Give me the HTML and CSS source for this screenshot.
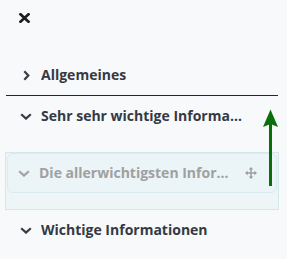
FILE: index.html
```html
<!DOCTYPE html>
<html lang="de">
<head>
<meta charset="utf-8">
<link rel="stylesheet" href="styles.css">
</head>
<body>
<div class="panel">
  <div class="toolbar">
    <span class="close" aria-label="Schließen">
      <svg width="11" height="10" viewBox="0 0 11 10"><path d="M1.5 1.3 L9.5 8.7 M9.5 1.3 L1.5 8.7" stroke="#1e1e1e" stroke-width="2.7" stroke-linecap="square" fill="none"/></svg>
    </span>
  </div>
  <ul class="tree">
    <li class="item">
      <span class="chev"><svg width="7" height="11" viewBox="0 0 7 11"><polyline points="1.3,1.3 5.3,5.5 1.3,9.7" stroke="#363b45" stroke-width="2.2" fill="none"/></svg></span>
      <span class="label">Allgemeines</span>
    </li>
    <li class="drop-line"></li>
    <li class="item">
      <span class="chev"><svg width="12" height="7" viewBox="0 0 12 7"><polyline points="1.2,1.2 6,5.6 10.8,1.2" stroke="#363b45" stroke-width="2.2" fill="none"/></svg></span>
      <span class="label">Sehr sehr wichtige Informationen zum Thema</span>
    </li>
    <li class="ghost">
      <div class="ghost-card">
        <span class="chev"><svg width="12" height="7" viewBox="0 0 12 7"><polyline points="1.2,1.2 6,5.6 10.8,1.2" stroke="#a3a3a3" stroke-width="2.2" fill="none"/></svg></span>
        <span class="label">Die allerwichtigsten Informationen</span>
        <span class="move"><svg width="12" height="12" viewBox="0 0 12 12" fill="#9a9a9a"><rect x="5.3" y="2" width="1.4" height="8"/><rect x="2" y="5.3" width="8" height="1.4"/><polygon points="6,0 8.2,2.6 3.8,2.6"/><polygon points="6,12 8.2,9.4 3.8,9.4"/><polygon points="0,6 2.6,3.8 2.6,8.2"/><polygon points="12,6 9.4,3.8 9.4,8.2"/></svg></span>
      </div>
    </li>
    <li class="item">
      <span class="chev"><svg width="12" height="7" viewBox="0 0 12 7"><polyline points="1.2,1.2 6,5.6 10.8,1.2" stroke="#363b45" stroke-width="2.2" fill="none"/></svg></span>
      <span class="label">Wichtige Informationen</span>
    </li>
  </ul>
  <svg class="drag-arrow" width="17" height="78" viewBox="0 0 17 78"><polygon points="8.5,0.5 16,18 8.5,15 1,18" fill="#0a6e0a"/><rect x="7" y="14" width="3" height="63" fill="#0a6e0a"/></svg>
</div>
</body>
</html>
```
FILE: styles.css
```css
* { box-sizing: border-box; }
html, body { margin: 0; padding: 0; }
body {
  background: #f8f9fa;
  font-family: "Open Sans", "Liberation Sans", sans-serif;
  width: 287px;
  height: 259px;
  overflow: hidden;
}
.panel {
  position: relative;
  height: 259px;
}
.toolbar {
  height: 55px;
  padding: 13px 0 0 19px;
}
.close {
  display: block;
  width: 11px;
  height: 10px;
}
.close svg { display: block; }
.tree {
  list-style: none;
  margin: 0;
  padding: 0;
}
.item {
  display: flex;
  align-items: center;
  height: 40px;
  padding: 0 43px 0 20px;
  color: #343944;
  font-size: 14px;
  font-weight: 700;
}
.drop-line + .item { margin-bottom: 16px; }
.chev {
  flex: 0 0 12px;
  width: 12px;
  margin-right: 9px;
  display: flex;
  align-items: center;
  justify-content: center;
}
.chev svg { display: block; }
.label {
  flex: 1;
  min-width: 0;
  white-space: nowrap;
  overflow: hidden;
  text-overflow: ellipsis;
  line-height: 20px;
}
.drop-line {
  height: 1px;
  margin: 0 9px 0 6px;
  background: #262626;
}
.ghost {
  margin: 0 8px 0 5px;
  padding: 0 1px 16px;
  border: 1px solid #d3e8ec;
  background: #eef5f7;
}
.ghost-card {
  display: flex;
  align-items: center;
  height: 40px;
  padding: 0 19px 0 10px;
  border: 1px solid #d9ebef;
  border-radius: 6px;
  background: #ebf4f6;
  color: #a0a0a0;
  font-size: 14px;
  font-weight: 700;
}
.move {
  flex: 0 0 12px;
  margin-left: 12px;
  display: flex;
}
.drag-arrow {
  position: absolute;
  left: 262px;
  top: 109px;
}
```
